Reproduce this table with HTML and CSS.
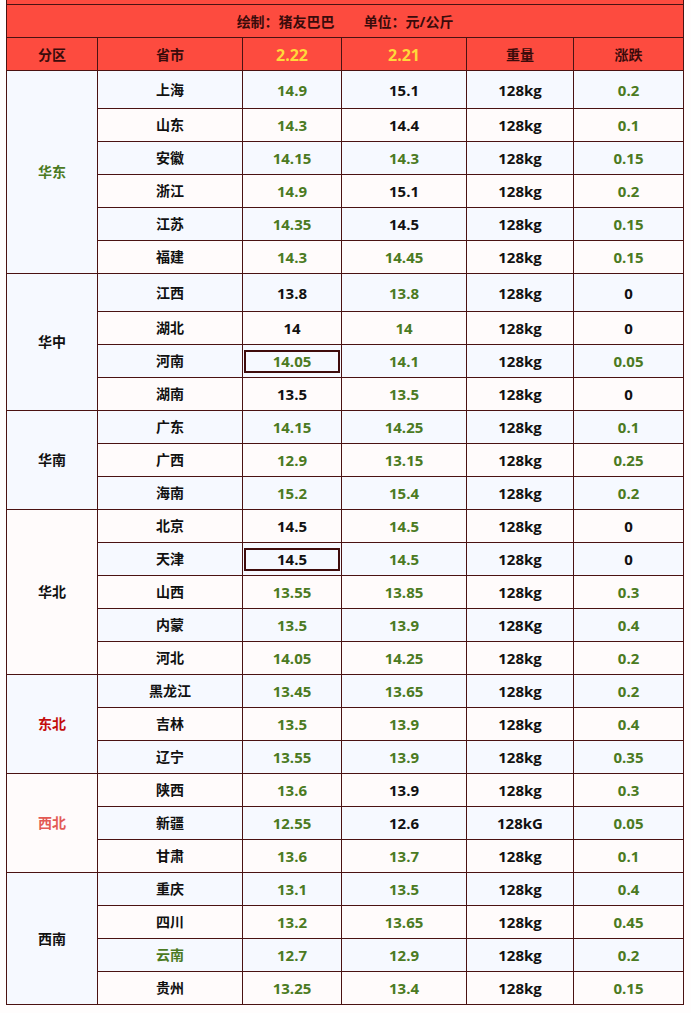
FILE: index.html
```html
<!DOCTYPE html>
<html lang="zh">
<head>
<meta charset="utf-8">
<title>猪价</title>
<link rel="stylesheet" href="styles.css">
</head>
<body>
<table class="price">
  <colgroup>
    <col class="c1"><col class="c2"><col class="c3"><col class="c4"><col class="c5"><col class="c6">
  </colgroup>
  <tbody>
    <tr class="cut"><td colspan="6"></td></tr>
    <tr class="title"><td colspan="6">绘制：猪友巴巴<span class="unit">单位：元/公斤</span></td></tr>
    <tr class="head">
      <td class="zh">分区</td><td class="zh">省市</td><td class="yel">2.22</td><td class="yel">2.21</td><td class="zh">重量</td><td class="zh">涨跌</td>
    </tr>

    <tr class="tall b"><td rowspan="6" class="grp zh b g">华东</td><td class="zh">上海</td><td class="g">14.9</td><td>15.1</td><td>128kg</td><td class="g">0.2</td></tr>
    <tr class="p"><td class="zh">山东</td><td class="g">14.3</td><td>14.4</td><td>128kg</td><td class="g">0.1</td></tr>
    <tr class="b"><td class="zh">安徽</td><td class="g">14.15</td><td class="g">14.3</td><td>128kg</td><td class="g">0.15</td></tr>
    <tr class="p"><td class="zh">浙江</td><td class="g">14.9</td><td>15.1</td><td>128kg</td><td class="g">0.2</td></tr>
    <tr class="b"><td class="zh">江苏</td><td class="g">14.35</td><td>14.5</td><td>128kg</td><td class="g">0.15</td></tr>
    <tr class="p"><td class="zh">福建</td><td class="g">14.3</td><td class="g">14.45</td><td>128kg</td><td class="g">0.15</td></tr>

    <tr class="tall b"><td rowspan="4" class="grp zh b">华中</td><td class="zh">江西</td><td>13.8</td><td class="g">13.8</td><td>128kg</td><td>0</td></tr>
    <tr class="p"><td class="zh">湖北</td><td>14</td><td class="g">14</td><td>128kg</td><td>0</td></tr>
    <tr class="b"><td class="zh">河南</td><td class="g"><div class="box">14.05</div></td><td class="g">14.1</td><td>128kg</td><td class="g">0.05</td></tr>
    <tr class="p"><td class="zh">湖南</td><td>13.5</td><td class="g">13.5</td><td>128kg</td><td>0</td></tr>

    <tr class="b"><td rowspan="3" class="grp zh b">华南</td><td class="zh">广东</td><td class="g">14.15</td><td class="g">14.25</td><td>128kg</td><td class="g">0.1</td></tr>
    <tr class="p"><td class="zh">广西</td><td class="g">12.9</td><td class="g">13.15</td><td>128kg</td><td class="g">0.25</td></tr>
    <tr class="b"><td class="zh">海南</td><td class="g">15.2</td><td class="g">15.4</td><td>128kg</td><td class="g">0.2</td></tr>

    <tr class="p"><td rowspan="5" class="grp zh p">华北</td><td class="zh">北京</td><td>14.5</td><td class="g">14.5</td><td>128kg</td><td>0</td></tr>
    <tr class="b"><td class="zh">天津</td><td><div class="box">14.5</div></td><td class="g">14.5</td><td>128kg</td><td>0</td></tr>
    <tr class="p"><td class="zh">山西</td><td class="g">13.55</td><td class="g">13.85</td><td>128kg</td><td class="g">0.3</td></tr>
    <tr class="b"><td class="zh">内蒙</td><td class="g">13.5</td><td class="g">13.9</td><td>128Kg</td><td class="g">0.4</td></tr>
    <tr class="p"><td class="zh">河北</td><td class="g">14.05</td><td class="g">14.25</td><td>128kg</td><td class="g">0.2</td></tr>

    <tr class="b"><td rowspan="3" class="grp zh b dr">东北</td><td class="zh">黑龙江</td><td class="g">13.45</td><td class="g">13.65</td><td>128kg</td><td class="g">0.2</td></tr>
    <tr class="p"><td class="zh">吉林</td><td class="g">13.5</td><td class="g">13.9</td><td>128kg</td><td class="g">0.4</td></tr>
    <tr class="b"><td class="zh">辽宁</td><td class="g">13.55</td><td class="g">13.9</td><td>128kg</td><td class="g">0.35</td></tr>

    <tr class="p"><td rowspan="3" class="grp zh p lr">西北</td><td class="zh">陕西</td><td class="g">13.6</td><td>13.9</td><td>128kg</td><td class="g">0.3</td></tr>
    <tr class="b"><td class="zh">新疆</td><td class="g">12.55</td><td>12.6</td><td>128kG</td><td class="g">0.05</td></tr>
    <tr class="p"><td class="zh">甘肃</td><td class="g">13.6</td><td class="g">13.7</td><td>128kg</td><td class="g">0.1</td></tr>

    <tr class="b"><td rowspan="4" class="grp zh b">西南</td><td class="zh">重庆</td><td class="g">13.1</td><td class="g">13.5</td><td>128kg</td><td class="g">0.4</td></tr>
    <tr class="p"><td class="zh">四川</td><td class="g">13.2</td><td class="g">13.65</td><td>128kg</td><td class="g">0.45</td></tr>
    <tr class="b"><td class="zh g">云南</td><td class="g">12.7</td><td class="g">12.9</td><td>128kg</td><td class="g">0.2</td></tr>
    <tr class="p"><td class="zh">贵州</td><td class="g">13.25</td><td class="g">13.4</td><td>128kg</td><td class="g">0.15</td></tr>
  </tbody>
</table>
</body>
</html>
```
FILE: styles.css
```css
html, body {
  margin: 0;
  padding: 0;
  background: #fffdfd;
}

.price {
  margin: -29px 0 0 6px;
  width: 677px;
  border-collapse: collapse;
  table-layout: fixed;
  font-family: "Open Sans", "Noto Sans CJK SC", sans-serif;
  font-weight: 700;
  font-size: 15px;
  color: #111;
}

.c1 { width: 91px; }
.c2 { width: 145px; }
.c3 { width: 99px; }
.c4 { width: 125px; }
.c5 { width: 107px; }
.c6 { width: 110px; }

.price td {
  border: 1px solid #4a1212;
  padding: 0;
  height: 32px;
  text-align: center;
  vertical-align: middle;
  line-height: 18px;
}

.price td.zh {
  font-size: 14px;
}

.price tr.cut td,
.price tr.title td,
.price tr.head td {
  background: #fd4b3f;
  color: #3a0b0b;
}

.price tr.title td {
  font-size: 14px;
  padding-top: 1px;
  height: 31px;
}

.price tr.head td {
  padding-top: 2px;
  height: 30px;
}

.unit {
  margin-left: 29px;
}

.price tr.head td.yel {
  color: #ffd83a;
  font-size: 16px;
}

.price tr.tall td {
  height: 37px;
}

.price tr.b td { background: #f6f9ff; }
.price tr.p td { background: #fffbfb; }
.price td.grp.b { background: #f6f9ff; }
.price td.grp.p { background: #fffbfb; }

.price td.g { color: #4b7a22; }
.price td.dr { color: #c40d0d; }
.price td.lr { color: #e35a55; }

.box {
  box-sizing: border-box;
  height: 23px;
  margin: 0 1px 0 1px;
  border: 2px solid #3f0c0c;
  line-height: 19px;
}
```
